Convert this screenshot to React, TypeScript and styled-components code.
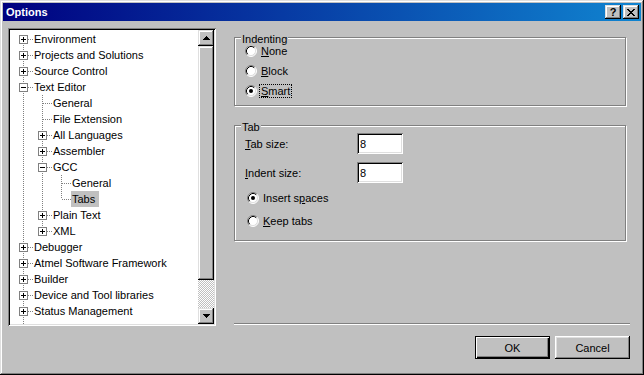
import React from 'react';
import styled, { createGlobalStyle, css } from 'styled-components';

// Classic 3D palette
const face = '#c0c0c0';
const light = '#dfdfdf';
const shadow = '#808080';

const raised = css`
  box-shadow: inset -1px -1px #000, inset 1px 1px ${light}, inset -2px -2px ${shadow},
    inset 2px 2px #fff;
`;

const sunken = css`
  box-shadow: inset 1px 1px ${shadow}, inset -1px -1px #fff, inset 2px 2px #000,
    inset -2px -2px ${light};
`;

const GlobalStyle = createGlobalStyle`
  html, body { margin: 0; padding: 0; background: ${face}; }
  body {
    font-family: 'Liberation Sans', Arial, sans-serif;
    font-size: 11px;
    color: #000;
  }
`;

// "continues" marks a node whose next sibling is scrolled out of view
type Node = {
  label: string;
  box?: '+' | '-';
  children?: Node[];
  selected?: boolean;
  continues?: boolean;
};

const tree: Node[] = [
  { label: 'Environment', box: '+' },
  { label: 'Projects and Solutions', box: '+' },
  { label: 'Source Control', box: '+' },
  {
    label: 'Text Editor',
    box: '-',
    children: [
      { label: 'General' },
      { label: 'File Extension' },
      { label: 'All Languages', box: '+' },
      { label: 'Assembler', box: '+' },
      {
        label: 'GCC',
        box: '-',
        children: [{ label: 'General' }, { label: 'Tabs', selected: true }]
      },
      { label: 'Plain Text', box: '+' },
      { label: 'XML', box: '+' }
    ]
  },
  { label: 'Debugger', box: '+' },
  { label: 'Atmel Software Framework', box: '+' },
  { label: 'Builder', box: '+' },
  { label: 'Device and Tool libraries', box: '+' },
  { label: 'Status Management', box: '+', continues: true }
];

type FlatRow = { node: Node; level: number; rails: boolean[]; hasNext: boolean; isFirst: boolean };

const flatten = (nodes: Node[], level: number, rails: boolean[], out: FlatRow[]) => {
  nodes.forEach((node, i) => {
    const hasNext = i < nodes.length - 1 || !!node.continues;
    out.push({ node, level, rails, hasNext, isFirst: level === 0 && i === 0 });
    if (node.children && node.box === '-') flatten(node.children, level + 1, [...rails, hasNext], out);
  });
  return out;
};

const dotV = `repeating-linear-gradient(to bottom, ${shadow} 0 1px, transparent 1px 2px)`;
const dotH = `repeating-linear-gradient(to right, ${shadow} 0 1px, transparent 1px 2px)`;

// Styling
const Window = styled.div`
  width: 644px;
  height: 375px;
  box-sizing: border-box;
  padding: 3px;
  background: ${face};
  box-shadow: inset -1px -1px #000, inset 1px 1px ${light}, inset -2px -2px ${shadow},
    inset 2px 2px #fff;
  display: flex;
  flex-direction: column;
  overflow: hidden;
`;

const TitleBar = styled.div`
  height: 18px;
  flex: none;
  display: flex;
  align-items: center;
  padding: 0 2px 0 3px;
  background: linear-gradient(to right, #000080, #1084d0);
`;

const Title = styled.span`
  flex: 1;
  color: #fff;
  font-weight: bold;
  font-size: 11px;
  line-height: 18px;
`;

const CaptionButton = styled.div`
  width: 16px;
  height: 14px;
  margin-left: 2px;
  background: ${face};
  ${raised};
  display: flex;
  align-items: center;
  justify-content: center;
  font-weight: bold;
  font-size: 11px;
  line-height: 14px;
`;

const Main = styled.div`
  display: flex;
  gap: 18px;
  height: 298px;
  margin: 7px 0 0 5px;
`;

const TreeBox = styled.div`
  width: 208px;
  box-sizing: border-box;
  padding: 2px;
  background: #fff;
  ${sunken};
  display: flex;
`;

const TreeList = styled.div`
  flex: 1;
  overflow: hidden;
  padding: 1px 0 0 4px;
`;

const TreeRow = styled.div`
  display: flex;
  height: 16px;
`;

const Rail = styled.span<{ $on: boolean }>`
  flex: none;
  width: 19px;
  background: ${({ $on }) => ($on ? `${dotV} 9px 0 / 1px 100% no-repeat` : 'none')};
`;

const connectorBg = (up: boolean, down: boolean) => {
  const layers = [`${dotH} 10px 8px / 9px 1px no-repeat`];
  if (up) layers.push(`${dotV} 9px 0 / 1px 8px no-repeat`);
  if (down) layers.push(`${dotV} 9px 8px / 1px 8px no-repeat`);
  return layers.join(', ');
};

const Connector = styled.span<{ $up: boolean; $down: boolean }>`
  flex: none;
  width: 19px;
  box-sizing: border-box;
  padding-left: 5px;
  display: flex;
  align-items: center;
  background: ${({ $up, $down }) => connectorBg($up, $down)};
`;

const ExpandBox = styled.span`
  width: 9px;
  height: 9px;
  box-sizing: border-box;
  border: 1px solid ${shadow};
  background: #fff;
  display: flex;
`;

const NodeLabel = styled.span<{ $selected?: boolean }>`
  line-height: 16px;
  padding: 0 4px 0 1px;
  white-space: nowrap;
  background: ${({ $selected }) => ($selected ? face : 'transparent')};
`;

const TailRow = styled.div`
  height: 16px;
  margin-left: 9px;
  width: 1px;
  background: ${dotV};
`;

const ScrollBar = styled.div`
  width: 16px;
  flex: none;
  display: flex;
  flex-direction: column;
`;

const ScrollButton = styled.div`
  height: 16px;
  flex: none;
  background: ${face};
  ${raised};
  display: flex;
  align-items: center;
  justify-content: center;
`;

const Thumb = styled.div`
  height: 234px;
  flex: none;
  background: ${face};
  ${raised};
`;

const Track = styled.div`
  flex: 1;
  background: repeating-conic-gradient(${face} 0 25%, #fff 0 50%) 0 0 / 2px 2px;
`;

const RightPane = styled.div`
  width: 396px;
  display: flex;
  flex-direction: column;
`;

const Group = styled.div<{ $mt: number; $pad: string }>`
  position: relative;
  width: 392px;
  box-sizing: border-box;
  margin-top: ${({ $mt }) => $mt}px;
  padding: ${({ $pad }) => $pad};
  border: 1px solid ${shadow};
  box-shadow: inset 1px 1px #fff, 1px 1px #fff;
  display: flex;
  flex-direction: column;
`;

const Legend = styled.span`
  position: absolute;
  top: -5px;
  left: 6px;
  padding: 0 1px;
  line-height: 13px;
  background: ${face};
`;

const RadioRow = styled.div<{ $indent?: number; $mt?: number }>`
  display: flex;
  align-items: center;
  height: 20px;
  margin-left: ${({ $indent = 0 }) => $indent}px;
  margin-top: ${({ $mt = 0 }) => $mt}px;
`;

const RadioText = styled.span<{ $focus?: boolean }>`
  margin-left: 2px;
  padding: 0 1px;
  line-height: 12px;
  border: 1px dotted ${({ $focus }) => ($focus ? '#000' : 'transparent')};
`;

const FieldRow = styled.div<{ $mt?: number }>`
  display: flex;
  align-items: center;
  height: 21px;
  margin-top: ${({ $mt = 0 }) => $mt}px;
`;

const FieldLabel = styled.span`
  width: 112px;
`;

const TextInput = styled.input`
  width: 46px;
  height: 21px;
  box-sizing: border-box;
  border: none;
  outline: none;
  padding: 0 3px;
  margin: 0;
  font: inherit;
  color: #000;
  background: #fff;
  ${sunken};
`;

const Separator = styled.div`
  margin-top: auto;
  margin-bottom: 1px;
  border-top: 1px solid ${shadow};
  border-bottom: 1px solid #fff;
`;

const Footer = styled.div`
  display: flex;
  justify-content: flex-end;
  gap: 5px;
  margin-top: 10px;
  padding-right: 11px;
`;

const DialogButton = styled.button<{ $default?: boolean }>`
  width: 75px;
  height: 23px;
  padding: 0;
  border: none;
  font: inherit;
  color: #000;
  background: ${face};
  box-shadow: ${({ $default }) =>
    $default
      ? `inset 1px 1px #000, inset -1px -1px #000, inset 2px 2px #fff, inset -2px -2px #000, inset -3px -3px ${shadow}`
      : `inset -1px -1px #000, inset 1px 1px #fff, inset -2px -2px ${shadow}, inset 2px 2px ${light}`};
`;

// Drawings
const PlusMinus = ({ open }: { open: boolean }) => (
  <svg width="7" height="7" viewBox="0 0 7 7" shapeRendering="crispEdges">
    <rect x="1" y="3" width="5" height="1" fill="#000" />
    {!open && <rect x="3" y="1" width="1" height="5" fill="#000" />}
  </svg>
);

const Arrow = ({ down }: { down?: boolean }) => (
  <svg
    width="7"
    height="4"
    viewBox="0 0 7 4"
    shapeRendering="crispEdges"
    style={down ? { transform: 'scaleY(-1)' } : undefined}
  >
    <path d="M3 0h1v1h-1z M2 1h3v1h-3z M1 2h5v1h-5z M0 3h7v1h-7z" fill="#000" />
  </svg>
);

const CloseGlyph = () => (
  <svg width="8" height="7" viewBox="0 0 8 7" shapeRendering="crispEdges">
    <path
      d="M0 0h2v1h-2z M6 0h2v1h-2z M1 1h2v1h-2z M5 1h2v1h-2z M2 2h4v1h-4z M3 3h2v1h-2z M2 4h4v1h-4z M1 5h2v1h-2z M5 5h2v1h-2z M0 6h2v1h-2z M6 6h2v1h-2z"
      fill="#000"
    />
  </svg>
);

const RadioDot = ({ checked }: { checked?: boolean }) => (
  <svg width="12" height="12" viewBox="0 0 12 12">
    <circle cx="6" cy="6" r="5" fill="#fff" />
    <path d="M2.11 9.89 A5.5 5.5 0 0 1 9.89 2.11" fill="none" stroke={shadow} strokeWidth="1" />
    <path d="M9.89 2.11 A5.5 5.5 0 0 1 2.11 9.89" fill="none" stroke="#fff" strokeWidth="1" />
    <path d="M2.82 9.18 A4.5 4.5 0 0 1 9.18 2.82" fill="none" stroke="#000" strokeWidth="1" />
    <path d="M9.18 2.82 A4.5 4.5 0 0 1 2.82 9.18" fill="none" stroke={light} strokeWidth="1" />
    {checked && <circle cx="6" cy="6" r="2" fill="#000" />}
  </svg>
);

const Radio = ({
  checked,
  focus,
  indent,
  mt,
  children
}: {
  checked?: boolean;
  focus?: boolean;
  indent?: number;
  mt?: number;
  children: React.ReactNode;
}) => (
  <RadioRow $indent={indent} $mt={mt}>
    <RadioDot checked={checked} />
    <RadioText $focus={focus}>{children}</RadioText>
  </RadioRow>
);

const rows = flatten(tree, 0, [], []);

const App = (): JSX.Element => {
  return (
    <>
      <GlobalStyle />
      <Window>
        <TitleBar>
          <Title>Options</Title>
          <CaptionButton>?</CaptionButton>
          <CaptionButton>
            <CloseGlyph />
          </CaptionButton>
        </TitleBar>

        <Main>
          <TreeBox>
            <TreeList>
              {rows.map((row, index) => (
                <TreeRow key={index}>
                  {row.rails.map((on, i) => (
                    <Rail key={i} $on={on} />
                  ))}
                  <Connector $up={!row.isFirst} $down={row.hasNext}>
                    {row.node.box && (
                      <ExpandBox>
                        <PlusMinus open={row.node.box === '-'} />
                      </ExpandBox>
                    )}
                  </Connector>
                  <NodeLabel $selected={row.node.selected}>{row.node.label}</NodeLabel>
                </TreeRow>
              ))}
              <TailRow />
            </TreeList>
            <ScrollBar>
              <ScrollButton>
                <Arrow />
              </ScrollButton>
              <Thumb />
              <Track />
              <ScrollButton>
                <Arrow down />
              </ScrollButton>
            </ScrollBar>
          </TreeBox>

          <RightPane>
            <Group $mt={9} $pad="3px 0 4px 10px">
              <Legend>Indenting</Legend>
              <Radio>
                <u>N</u>one
              </Radio>
              <Radio>
                <u>B</u>lock
              </Radio>
              <Radio checked focus>
                <u>S</u>mart
              </Radio>
            </Group>

            <Group $mt={19} $pad="7px 0 9px 10px">
              <Legend>Tab</Legend>
              <FieldRow>
                <FieldLabel>
                  <u>T</u>ab size:
                </FieldLabel>
                <TextInput defaultValue="8" />
              </FieldRow>
              <FieldRow $mt={8}>
                <FieldLabel>
                  <u>I</u>ndent size:
                </FieldLabel>
                <TextInput defaultValue="8" />
              </FieldRow>
              <Radio checked indent={2} mt={5}>
                Insert s<u>p</u>aces
              </Radio>
              <Radio indent={2} mt={3}>
                <u>K</u>eep tabs
              </Radio>
            </Group>

            <Separator />
          </RightPane>
        </Main>

        <Footer>
          <DialogButton $default>OK</DialogButton>
          <DialogButton>Cancel</DialogButton>
        </Footer>
      </Window>
    </>
  );
};

export default App;
